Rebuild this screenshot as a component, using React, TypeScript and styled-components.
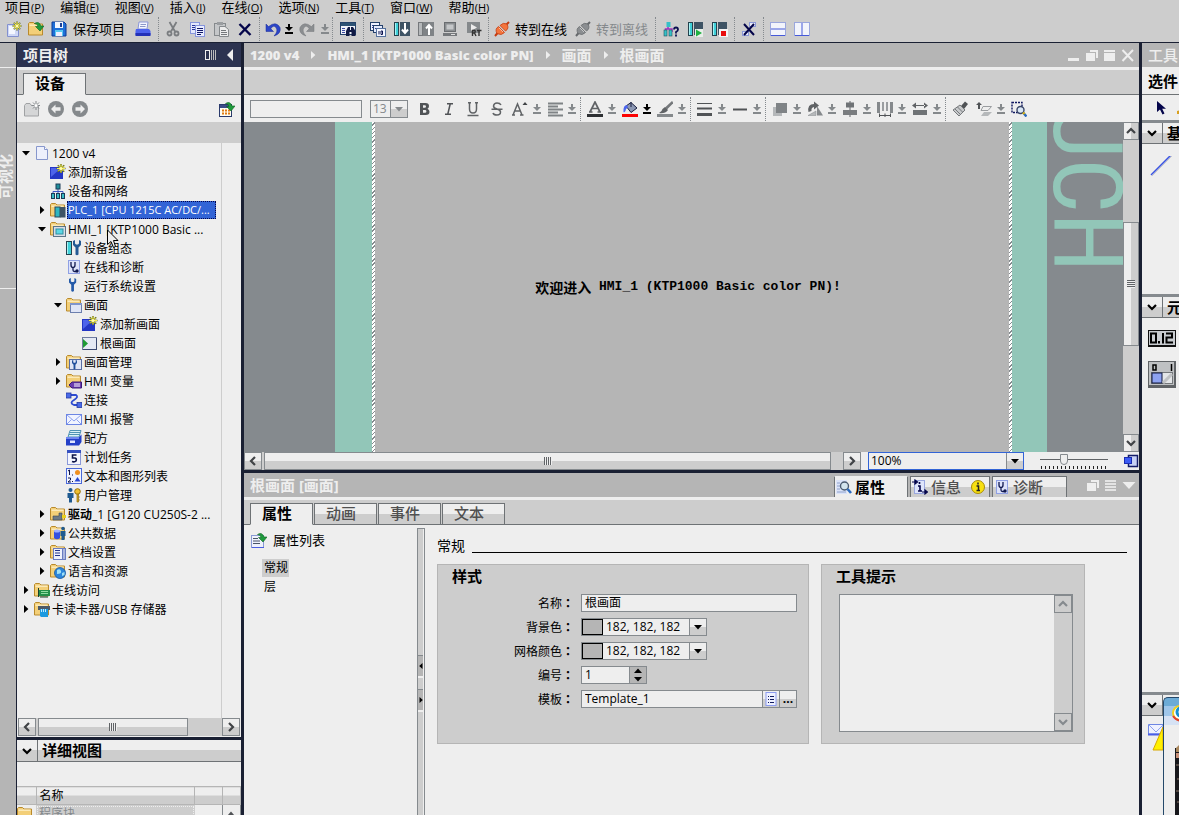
import React from 'react';
import styled, { createGlobalStyle, css } from 'styled-components';

const c = {
  panel: '#eeeeee',
  bar: '#cdcdcd',
  mid: '#b5b5b5',
  line: '#858a8e',
  edge: '#6e7275',
  dark: '#1a2033',
  title: '#2c3350',
  teal: '#92c6b8',
  slate: '#858a8e',
  select: '#3264d6',
  dim: '#85898c',
};
const split = 'linear-gradient(#eeeeee 50%, #cdcdcd 50%)';

const Global = createGlobalStyle`
  *, *::before, *::after { box-sizing: border-box; }
  html, body { margin: 0; padding: 0; }
  body {
    background: ${c.panel};
    color: #000;
    font: 12px/18px "Open Sans", "Noto Sans CJK SC", sans-serif;
    overflow: hidden;
  }
  button, input, select, textarea { font: inherit; color: inherit; margin: 0; padding: 0; border: 0; border-radius: 0; background: none; }
  ul { list-style: none; margin: 0; padding: 0; }
  h2, h3 { margin: 0; }
  svg { display: block; flex: none; }
`;

/* ---------- icon drawings ---------- */

const star = (x: number, y: number) => (
  <g transform={`translate(${x} ${y})`}>
    <path d="M0-4.500V4.500M-4.500 0H4.500M-3.200-3.200L3.200 3.200M3.200-3.200L-3.200 3.200" stroke="#5f6a20" strokeWidth="1.600" />
    <path d="M0-4V4M-4 0H4M-2.700-2.700L2.700 2.700M2.700-2.700L-2.700 2.700" stroke="#fff24a" strokeWidth="1" />
    <circle r="1.500" fill="#fffbb0" />
  </g>
);
const folder = (
  <>
    <path d="M.5 2.500L1.500 1.500H5.500L7 3H14.500V14H.5Z" fill="#f3cf78" stroke="#b98a2c" />
    <path d="M1.500 3.500H13.500V5H1.500Z" fill="#fbe9b8" />
  </>
);
const tealBar = (x: number, w = 5) => (
  <>
    <rect x={x} y="1" width={w} height="14" fill="#24424e" />
    <rect x={x + 1} y="2" width={w - 2} height="12" fill="#3fd0d8" />
    <rect x={x + 1} y="2" width="1" height="12" fill="#a8f2f4" />
  </>
);
const nodes = (
  <>
    <path d="M8 5V9M3 11V8.500H13V11M8 8V11" stroke="#3a55c0" fill="none" />
    <rect x="6" y="1" width="4" height="5" fill="#1f8f9a" stroke="#1c3c58" />
    <rect x="1.500" y="10.500" width="3" height="5" fill="#38bcc6" stroke="#1c3c58" />
    <rect x="6.500" y="10.500" width="3" height="5" fill="#38bcc6" stroke="#1c3c58" />
    <rect x="11.500" y="10.500" width="3" height="5" fill="#38bcc6" stroke="#1c3c58" />
  </>
);
const wrench = (x: number, fill: string, s = 1) => (
  <g transform={`translate(${x} 0) scale(${s})`}>
    <path d="M0 1V5L2.500 7.500V14.500Q4 16 5.500 14.500V7.500L8 5V1L6 0V3.500L5 4.500H3L2 3.500V0Z" fill={fill} />
  </g>
);
const stetho = (
  <>
    <rect x="2.500" y="1.500" width="11" height="13" fill="#dde3fa" stroke="#8fa0e4" />
    <path d="M5 3V6Q5 8.500 7 8.500T9 6V3M7 8.500V11Q7 12.500 8.500 12.500H10" stroke="#101850" fill="none" strokeWidth="1.300" />
    <circle cx="11" cy="12" r="1.700" fill="#101850" />
  </>
);
const greenArrow = (
  <path d="M6.500 2.500Q11-.5 13 5H16L12 10L7.500 5.500H10Q9.500 2.500 6.500 2.500Z" fill="#1f9a3c" stroke="#0d6420" strokeWidth=".6" />
);
const plug = (a: string, b: string) => (
  <>
    <path d="M1 15L4 11.500M12 4L15 1" stroke={b} strokeWidth="2" />
    <path d="M3 12.500Q.5 8 4.500 5.500L10.500 11.500Q7.500 15 3 12.500Z" fill={a} stroke={b} strokeWidth=".8" />
    <path d="M6 4.500Q9 1 13 3Q15.500 7.500 11.500 10Z" fill={a} stroke={b} strokeWidth=".8" />
    <path d="M5 7L9 11" stroke="#fff" strokeOpacity=".5" />
  </>
);

const icons: Record<string, React.ReactNode> = {
  newProject: (<><path d="M1.500 3.500H12.500V15.500H1.500Z" fill="#cfd8f6" stroke="#8391cf" /><path d="M3 5H9V13H3Z" fill="#f4f7ff" />{star(11, 5)}</>),
  open: (<>{folder}{greenArrow}</>),
  folder,
  save: (<><path d="M1 1H13L15 3V15H1Z" fill="#1f6fd8" stroke="#0f3b96" /><rect x="4" y="1" width="8" height="6" fill="#f2f6ff" /><rect x="9" y="2" width="2" height="4" fill="#1c3f94" /><rect x="4" y="9" width="8" height="6" fill="#58c8f0" /><rect x="5" y="11" width="6" height="4" fill="#eef" /></>),
  print: (<><path d="M4 1H13L12 8H3Z" fill="#f4f6ff" stroke="#8b96d6" /><path d="M5.500 3.500H11M5 5.500H10.500" stroke="#8d97c8" /><path d="M1 8H14L15.500 10V14H.5V10Z" fill="#4c62ee" /><path d="M.5 12H15.500V15H.5Z" fill="#2331b8" /></>),
  cut: (<g stroke="#7a7d80" fill="none" strokeWidth="1.800"><path d="M4.500 1L10 10.500M11.500 1L6 10.500" /><circle cx="4.500" cy="12.500" r="2" /><circle cx="11.500" cy="12.500" r="2" /></g>),
  copy: (<><rect x="1.500" y="1.500" width="9" height="11" fill="#e3e8fc" stroke="#8695dc" /><path d="M3 4.500H8M3 6.500H8M3 8.500H8" stroke="#26339a" /><rect x="6.500" y="4.500" width="9" height="11" fill="#e9edff" stroke="#8695dc" /><path d="M8 7.500H14M8 9.500H14M8 11.500H14M8 13.500H12" stroke="#121a6a" /></>),
  paste: (<><rect x="1.500" y="2.500" width="11" height="12" fill="#c5c7c9" stroke="#85898c" /><rect x="4" y="1" width="6" height="3" fill="#9a9da0" /><path d="M6.500 5.500H12L15.500 8.500V15.500H6.500Z" fill="#ececec" stroke="#85898c" /><path d="M8 9.500H13M8 11.500H14M8 13.500H14" stroke="#75787b" /></>),
  cross: (<path d="M2.500 3L13.500 14M13 3L2.500 14" stroke="#04054a" strokeWidth="2.400" />),
  undo: (<path d="M1 3V10.500H8.500L5.800 7.800Q8 3.500 11 6.500 13.500 10.500 9 15 16.500 12.500 15 6.500 11-.5 3.600 5.600Z" fill="#2b45c8" stroke="#1a2a94" strokeWidth=".5" />),
  redo: (<path d="M15 3V10.500H7.500L10.200 7.800Q8 3.500 5 6.500 2.500 10.500 7 15-.5 12.500 1 6.500 5-.5 12.400 5.600Z" fill="#8b8e91" stroke="#77797c" strokeWidth=".5" />),
  find: (<><rect x=".5" y="1.500" width="15" height="12" fill="#f0f2fa" stroke="#24426a" /><rect x="1" y="2" width="14" height="3" fill="#2c5274" /><path d="M2 7.500H5M2 9.500H5M2 11.500H5" stroke="#3a4aa0" /><path d="M6 15V10L8 6H10V9H11V6H13L15.500 10V15H11.500V11H9.500V15Z" fill="#101a44" /></>),
  compile: (<><rect x=".5" y="1.500" width="9" height="8" fill="#eef1ff" stroke="#24406a" /><path d="M2 4.500H8M2 6.500H8" stroke="#2a3a9a" /><rect x="3.500" y="4.500" width="9" height="7" fill="#e4e9fc" stroke="#24406a" /><path d="M5 7.500H9" stroke="#2a3a9a" /><rect x="6.500" y="7.500" width="9" height="8" fill="#f4f6ff" stroke="#55709c" /><path d="M9 10V13.500M11 10H12.500V13.500H11Z" stroke="#0c1450" fill="none" /></>),
  load: (<><rect x="6" y="1" width="10" height="14" fill="#3e5364" />{tealBar(0)}<path d="M11 2V11M8 8.500L11 12L14 8.500" stroke="#fff" strokeWidth="2" fill="none" /></>),
  upload: (<><rect x="5" y="1" width="11" height="14" fill="#7f8386" /><rect x=".5" y="1.500" width="4" height="13" fill="#b5b8ba" stroke="#75787b" /><path d="M11 14V5M8 7.500L11 4L14 7.500" stroke="#fff" strokeWidth="2" fill="none" /></>),
  simulate: (<><rect x="2.500" y="1.500" width="11" height="9" fill="#8b8e91" stroke="#6a6d70" /><rect x="4.500" y="3.500" width="7" height="5" fill="#c5c7c9" /><path d="M1 12H15V15H1Z" fill="#75787b" /><path d="M9 13.500H13" stroke="#ddd" /></>),
  runtime: (<><rect x="1" y="1" width="13" height="11" fill="#85898c" /><path d="M5 3V10L11 6.500Z" fill="#ececec" /><path d="M6.500 15V9.500H8.500Q10 10 8.500 12H7M8.500 12L10 15M11 9.500H15.500M13 9.500V15" stroke="#333" strokeWidth="1.400" fill="none" /></>),
  online: plug('#f4743c', '#c43c12'),
  offline: plug('#8b8e91', '#66696c'),
  diag: (<><path d="M5 5V8M2.500 11V8H9V11" stroke="#a030c0" fill="none" strokeWidth="1.500" /><rect x="3.500" y="1" width="4" height="5" fill="#35c0c8" /><rect x="1" y="9" width="3" height="6" fill="#35c0c8" stroke="#23505c" strokeWidth=".6" /><rect x="6" y="9" width="3" height="6" fill="#35c0c8" stroke="#23505c" strokeWidth=".6" /><path d="M11 8.500Q11 6.500 13 6.500T15 8.500Q15 10 13 11V12.500M13 13.500V15.500" stroke="#0a0f50" strokeWidth="1.800" fill="none" /></>),
  start: (<><rect x="6" y="1" width="9" height="13" fill="#3e5364" />{tealBar(0)}<rect x="7" y="8" width="8" height="8" fill="#e8efe9" /><path d="M8 8.500V15.500L14 12Z" fill="#1fb040" /></>),
  stop: (<><rect x="6" y="1" width="9" height="13" fill="#3e5364" />{tealBar(0)}<rect x="7" y="8" width="9" height="8" fill="#f4f4f4" /><rect x="9" y="10" width="5" height="5" fill="#e80c0c" /></>),
  crossRef: (<><rect x="8.500" y="1.500" width="6" height="4" fill="#e8ebfa" stroke="#8a98d8" /><rect x="1.500" y="10.500" width="6" height="4" fill="#e8ebfa" stroke="#8a98d8" /><path d="M3 3L13 14M13 3L3 14" stroke="#04054a" strokeWidth="2" /></>),
  splitH: (<><rect x=".5" y="1.500" width="15" height="13" fill="#f2f4fb" stroke="#9aa6dc" /><path d="M1 8H15M1 14.500H15" stroke="#4559d8" /></>),
  splitV: (<><rect x=".5" y="1.500" width="15" height="13" fill="#f2f4fb" stroke="#9aa6dc" /><path d="M8 2V14M1 14.500H15" stroke="#4559d8" /></>),

  folderNew: (<><path d="M.5 4.500L2 2.500H6L7.500 4.500H14.500V15H.5Z" fill="#d5d6d7" stroke="#a0a2a4" /><path d="M12 0V9M7.500 4.500H16M9 1.500L15 7.500M15 1.500L9 7.500" stroke="#85898c" /><circle cx="12" cy="4.500" r="1.500" fill="#fff" /></>),
  back: (<><circle cx="8" cy="8" r="8" fill="#85898c" /><path d="M7.500 3.500L3 8L7.500 12.500V9.700H12.500V6.300H7.500Z" fill="#eee" /></>),
  forward: (<><circle cx="8" cy="8" r="8" fill="#85898c" /><path d="M8.500 3.500L13 8L8.500 12.500V9.700H3.500V6.300H8.500Z" fill="#eee" /></>),
  overview: (<><rect x=".5" y="3.500" width="12" height="12" fill="#fffdf0" stroke="#2a3a6c" /><rect x="1" y="4" width="11" height="3" fill="#3c4c88" /><path d="M3 9.500H5M6 9.500H8M9 9.500H11M3 12.500H5M6 12.500H8M9 12.500H11" stroke="#e07a10" strokeWidth="2" />{greenArrow}</>),

  project: (<><path d="M2.500 1.500H10.500L13.500 4.500V14.500H2.500Z" fill="#edf0fc" stroke="#8797cc" /><path d="M10.500 1.500V4.500H13.500" fill="#fff" stroke="#8797cc" /></>),
  addBox: (<><rect x="0" y="3" width="13" height="12" fill="#2436c4" /><path d="M1 4H11L1 13Z" fill="#4d63ea" />{star(11, 4.500)}</>),
  network: nodes,
  plc: (<>{folder}<rect x="5" y="5" width="5" height="10" fill="#2fb6c0" stroke="#28485a" /><rect x="10" y="5" width="5.500" height="10.500" fill="#3e5364" /></>),
  hmi: (<>{folder}<rect x="3.500" y="5.500" width="12" height="10" fill="#d8dde6" stroke="#5b7488" /><rect x="6" y="8" width="7" height="5" fill="#5cd6e4" stroke="#2e8fa0" /></>),
  config: (<>{tealBar(0, 6)}<g transform="translate(7 0)">{wrench(0, '#245a94')}</g></>),
  stetho,
  runtimeSet: wrench(3, '#245aa8', 0.9),
  screens: (<>{folder}<rect x="4.500" y="6.500" width="11" height="9" fill="#dfe5f6" stroke="#6c7fae" /><path d="M4 6H16V8H4Z" fill="#7f95cc" /></>),
  rootScreen: (<><rect x=".5" y="2.500" width="14" height="12" fill="#e4e9f4" stroke="#6f7ba0" /><path d="M14.500 3V15M1 14.500H15" stroke="#3a4870" /><path d="M1 4V13L6 8.500Z" fill="#1c9a34" /></>),
  screenMgmt: (<>{folder}<rect x="3.500" y="5.500" width="12" height="10" fill="#dfe5f6" stroke="#5a6ea4" /><g transform="translate(6 6)">{wrench(0, '#1f4f9c', 0.62)}</g></>),
  tags: (<>{folder}<path d="M3 12L6 9H15.500V15H6Z" fill="#6a3cb0" stroke="#3c1a78" /><path d="M8 11H14M8 13H14" stroke="#fff" /></>),
  link: (<><path d="M4 3H10Q13 5 8 8T8 13H13" stroke="#2e4cd0" fill="none" strokeWidth="1.800" /><rect x="0" y="1" width="5" height="5" fill="#4a6ae6" stroke="#2438a0" strokeWidth=".8" /><rect x="11" y="10.500" width="5" height="5" fill="#4a6ae6" stroke="#2438a0" strokeWidth=".8" /></>),
  mail: (<><rect x=".5" y="3.500" width="15" height="10" fill="#f1f4ff" stroke="#6d86e4" /><path d="M1 4L8 10L15 4M1 13L5.500 8.500M15 13L10.500 8.500" stroke="#8ea2ee" fill="none" /></>),
  recipe: (<><path d="M4 .5H15L13 7H2Z" fill="#d9f1f7" stroke="#4f93b4" /><path d="M3.500 2.500H14.500M3 4.500H14" stroke="#4f93b4" /><path d="M0 7H13L15.500 4.500V12L13 15.500H0Z" fill="#2440c8" /><path d="M0 7H13V9H0Z" fill="#6f86f0" /><rect x="4" y="10.500" width="5" height="2.500" fill="#dfe6ff" /></>),
  schedule: (<><rect x="1.500" y="1.500" width="13" height="14" fill="#f4f6ff" stroke="#8a98d8" /><rect x="1" y="1" width="14" height="3" fill="#3450c0" /><path d="M10.500 6H6.500V9H9Q11 9.500 10 12 8.500 13.500 6 12.500" stroke="#0c1448" strokeWidth="1.600" fill="none" /></>),
  textList: (<><rect x=".5" y=".5" width="15" height="15" fill="#f1f4ff" stroke="#4a68d8" /><path d="M2 3L3.500 2V7M2 10H4.500V12L2 14H5M6.500 6.500V7.500M6.500 13V14" stroke="#0c1448" fill="none" /><circle cx="11.500" cy="4.500" r="2.500" fill="#f09020" /><path d="M8.500 13.500L11.500 9L14.500 13.500Z" fill="#2a48d0" /></>),
  users: (<><circle cx="4.500" cy="3" r="2" fill="#1f5a90" /><path d="M1.500 6H7.500V11H6V15.500H3V11H1.500Z" fill="#1f5a90" /><circle cx="11.500" cy="4.500" r="2.800" fill="#f0c030" stroke="#94700c" /><path d="M11 7H12.500V15H11ZM12.500 10H14M12.500 13H14" fill="#d8a820" stroke="#94700c" strokeWidth=".7" /></>),
  drive: (<>{folder}<path d="M3 10H9V7H12V14H3Z" fill="#6c7a86" stroke="#3c4650" strokeWidth=".6" /><rect x="12" y="9" width="4" height="3" fill="#e8d020" /></>),
  common: (<>{folder}<path d="M4 6Q7 4 10 6V13Q7 15.500 4 13Z" fill="#3350e0" /><ellipse cx="7" cy="6" rx="3" ry="1.500" fill="#9db0ff" /><circle cx="13" cy="3.500" r="1.800" fill="#1f5a90" /><path d="M10.500 6H15.500V11H14.500V15H11.500V11H10.500Z" fill="#1f5a90" /></>),
  docs: (<>{folder}<rect x="3.500" y="4.500" width="12" height="11" fill="#eef1fc" stroke="#6a7cc0" /><path d="M5 6.500H10M5 9H10M5 11.500H10" stroke="#24348c" /><path d="M12.500 5V15M14 5V15" stroke="#6a7cc0" /></>),
  globe: (<>{folder}<circle cx="10" cy="10" r="5.500" fill="#2c86dc" stroke="#1658a0" strokeWidth=".8" /><path d="M7 7Q10 5 11 8T7 11ZM12 10L14.500 9V12L12 13Z" fill="#9fe0f6" /></>),
  access: (<>{folder}<rect x="5" y="8" width="11" height="6" fill="#239048" /><path d="M4.500 6V15M7 14V16M9 14V16M11 14V16M13 14V16" stroke="#14402c" /><path d="M7 9.500H14M7 11.500H14" stroke="#8fdca0" /></>),
  card: (<>{folder}<rect x="4" y="5" width="12" height="4" fill="#4d5a68" /><path d="M6 8H14V16H7L6 15Z" fill="#1c9ae0" /><path d="M7.500 8V11M9.500 8V11M11.500 8V11" stroke="#bfe8ff" /></>),

  bold: (<path fillRule="evenodd" d="M3 2H8.500Q12 2 12 5 12 7 10.500 7.700 12.500 8.500 12.500 10.700 12.500 14 8.800 14H3ZM6 4.200V6.800H7.800Q9 6.800 9 5.500T7.800 4.200ZM6 9V11.800H8Q9.400 11.800 9.400 10.400T8 9Z" fill="#505356" />),
  italic: (<path d="M6 2.700H12M4 13.300H10M9.300 2.500L6.700 13.500" stroke="#505356" strokeWidth="1.500" />),
  underline: (<path d="M3 1.700H6M10 1.700H13M4.500 2V8Q4.500 12 8 12T11.500 8V2M2.500 14.500H13.500" stroke="#606366" strokeWidth="1.500" fill="none" />),
  strike: (<path d="M12 4Q11 2 8 2T4.500 5Q4.500 7 8 8T11.500 11Q11.500 14 8 14T4 12M2.500 8.300H13.500" stroke="#606366" strokeWidth="1.500" fill="none" />),
  fontSize: (<><path d="M1 14L5.500 3L10 14M2.500 10H8.500M0 14H3M8 14H11.500" stroke="#606366" strokeWidth="1.500" fill="none" /><path d="M10.500 4L13 1L15.500 4Z" fill="#404346" /></>),
  alignText: (<path d="M1 2.500H16M1 5.500H11M1 8.500H16M1 11.500H11M1 14.500H16" stroke="#7f8386" strokeWidth="2" />),
  fontColor: (<><path d="M3 11L8 1L13 11M5 7.500H11M2 11H5.500M10.500 11H14" stroke="#606366" strokeWidth="1.700" fill="none" /><rect x="0" y="13" width="16" height="3" fill="#2d3033" /></>),
  fill: (<><path d="M4 5L9 1.500L15 7L9 11.500Z" fill="#8c98b4" stroke="#1a2040" /><path d="M9 1V6" stroke="#1a2040" /><path d="M5 4Q1 4 1.500 11 3.500 12 4 8L6 6.500Z" fill="#4d66ee" /><rect x="0" y="13" width="16" height="3" fill="#fb0404" /></>),
  brush: (<><path d="M15 0L8 6.500L10 8.500L16.500 2Z" fill="#75787b" /><path d="M8 6L11 9Q8 13 2 12 5 10.500 5.500 8Z" fill="#606366" /><rect x="0" y="13" width="16" height="3" fill="#85898c" /></>),
  lines: (<><path d="M0 2.500H15" stroke="#505356" /><path d="M0 7.500H15" stroke="#505356" strokeWidth="2" /><path d="M0 13.500H15" stroke="#505356" strokeWidth="3" /></>),
  dash: (<path d="M1 8.500H15" stroke="#505356" strokeWidth="2" />),
  order: (<><rect x="1" y="6" width="9" height="9" fill="#b5b8ba" /><rect x="4" y="2" width="11" height="10" fill="#7f8386" /></>),
  rotate: (<><path d="M1.500 11Q0 3 7 3V.5L12 4.500L7 8.500V6Q4 6.500 4.500 10Z" fill="#606366" /><path d="M10 5V14.500H16Z" fill="#85898c" /><path d="M1 14.500L9 10V14.500Z" fill="#b5b8ba" stroke="#85898c" strokeWidth=".5" /></>),
  align: (<><path d="M8 0V16" stroke="#606366" /><rect x="4" y="1.500" width="8" height="5" fill="#6f7376" /><rect x="1" y="9" width="14" height="5" fill="#7a7d80" /></>),
  distribute: (<><rect x="0" y="1" width="3" height="11" fill="#85898c" /><rect x="5" y="1" width="2" height="9" fill="#9a9da0" /><rect x="9" y="1" width="2" height="9" fill="#9a9da0" /><rect x="13" y="1" width="3" height="11" fill="#85898c" /><path d="M2 14.500H14M2.500 12.500V16M8 12.500V16M13.500 12.500V16" stroke="#505356" /></>),
  sameSize: (<><path d="M0 4.500L4 1.500V7.500ZM16 4.500L12 1.500V7.500ZM3 4H13V5H3Z" fill="#606366" /><rect x="1" y="9" width="14" height="5" fill="#6f7376" /></>),
  format: (<><path d="M16 3L13 .5L9 5L12 8Z" fill="#505356" /><path d="M8 4L13 9L7 15L1 9Z" fill="#c8cacc" stroke="#75787b" /><path d="M3 8L8 13M5.500 6L10.500 11" stroke="#75787b" /></>),
  layer: (<><path d="M3 1L6 4H4V8H2V4H0Z" fill="#505356" /><path d="M7 5.500H15.500L12 9.500H5Z" fill="#eee" stroke="#9a9da0" /><path d="M8 11H16L12 15H5Z" fill="#b5b8ba" /></>),
  zoomSel: (<><rect x="1" y="1.500" width="10" height="10" fill="none" stroke="#101860" strokeDasharray="2 1" strokeWidth="1.400" /><circle cx="9.500" cy="9" r="3.500" fill="#dbe8f6" stroke="#3a4668" strokeWidth="1.400" /><path d="M12 11.500L15.500 15.500" stroke="#2a6ac0" strokeWidth="2.400" /><path d="M12 11.500L13.500 13" stroke="#d8b010" strokeWidth="2.400" /></>),
  pointer: (<path d="M2 1V12L5 9.500L7.500 14.500L9.500 13.500L7.200 8.800H11Z" fill="#04054a" />),

  propList: (<><rect x=".5" y="3.500" width="12" height="12" fill="#eef1fc" stroke="#8a9ad4" /><path d="M2 6.500H7M2 9H9M2 11.500H9" stroke="#4a5568" /><path d="M1 15.500H13" stroke="#4a5ee0" />{greenArrow}</>),
  inspect: (<><rect x="0" y="1" width="11" height="14" fill="#dbe3f8" /><path d="M1 4H4M1 7H4M1 10H4M1 13H10" stroke="#8ea2cc" /><circle cx="8.500" cy="7" r="4" fill="#d3e4ee" stroke="#4a5a70" strokeWidth="1.400" /><path d="M11.500 10L15 14" stroke="#2a6ac0" strokeWidth="2.600" /></>),
  info: (<><rect x="2.500" y="1.500" width="10" height="13" fill="#dfe5fb" stroke="#9aa8e0" /><path d="M0 3H4M3 1L5.500 3L3 5ZM10 13H14M13 11L15.500 13L13 15Z" stroke="#04054a" fill="#04054a" strokeWidth="1.200" /><path d="M7.500 3V5M6 7H8V12M6 12H10" stroke="#04054a" strokeWidth="1.600" fill="none" /></>),
  infoBadge: (<><circle cx="8" cy="8" r="6.500" fill="#f8e010" stroke="#a88c08" /><path d="M8 3.500V5.500M6.500 7H8.500V11.500M6.500 11.500H10" stroke="#222" strokeWidth="1.500" fill="none" /></>),
  winMin: (<rect x="2" y="11" width="11" height="3" fill="#eee" />),
  winRestore: (<><path d="M6 3H14V11H12V5H6Z" fill="#eee" /><rect x="2" y="6" width="9" height="8" fill="#eee" /></>),
  winMax: (<path d="M2 3H13V5H2ZM2 6H13V14H2Z" fill="#eee" />),
  winClose: (<path d="M2.500 3L13 14M13 3L2.500 14" stroke="#eee" strokeWidth="2" />),
  winList: (<path d="M2 3H13V5H2ZM2 6H13V8H2ZM2 9H13V11H2ZM2 12H13V14H2Z" fill="#e4e4e4" />),
  winDown: (<path d="M1.500 5H14.500L8 12Z" fill="#eee" />),
  columns: (<><rect x="2.500" y="3.500" width="4" height="9" fill="none" stroke="#eee" /><path d="M8.500 3V13M10.500 3V13M12.500 3V13" stroke="#bbb" /></>),
  collapse: (<path d="M11 2V14L5 8Z" fill="#eee" />),
  listBtn: (<><rect x="3" y="1.500" width="10" height="13" fill="#eef1ff" stroke="#8c9cf0" /><path d="M5 5.500H6M7 5.500H11M5 8.500H6M7 8.500H11M5 11.500H6M7 11.500H11" stroke="#101a60" /></>),
  fit: (<><rect x="5.500" y="2.500" width="9" height="11" fill="#c8d2f6" stroke="#141c68" strokeWidth="1.500" /><rect x="1.500" y="4.500" width="7" height="6" fill="#3c5cf4" stroke="#1a2cb0" /></>),
};

function Icon({ name, size = 16 }: { name: string; size?: number }) {
  return (
    <svg width={size} height={size} viewBox="0 0 16 16" fill="none" aria-hidden="true">
      {icons[name]}
    </svg>
  );
}
function Drop({ active }: { active?: boolean }) {
  return (
    <svg width="8" height="10" viewBox="0 0 8 10" fill={active ? '#000' : c.dim} aria-hidden="true">
      <path d="M3 0H5V3H8L4 7L0 3H3ZM0 8H8V10H0Z" />
    </svg>
  );
}
type Dir = 'up' | 'down' | 'left' | 'right';
const turn: Record<Dir, number> = { down: 0, left: 90, up: 180, right: 270 };
function Chevron({ dir, color = '#404346' }: { dir: Dir; color?: string }) {
  return (
    <svg width="10" height="10" viewBox="0 0 10 10" fill="none" aria-hidden="true">
      <path d="M1 3L5 7L9 3" stroke={color} strokeWidth="2.200" transform={`rotate(${turn[dir]} 5 5)`} />
    </svg>
  );
}
function Tri({ dir, color = '#000', size = 10 }: { dir: Dir; color?: string; size?: number }) {
  return (
    <svg width={size} height={size} viewBox="0 0 10 10" aria-hidden="true">
      <path d="M0 2.500H10L5 8Z" fill={color} transform={`rotate(${turn[dir]} 5 5)`} />
    </svg>
  );
}

/* ---------- frame ---------- */

const Shell = styled.div`
  display: flex;
  flex-direction: column;
  height: 100vh;
  min-height: 480px;
  overflow: hidden;
  background: ${c.bar};
`;
const MenuBar = styled.nav`
  display: flex;
  gap: 16px;
  height: 16px;
  flex: none;
  padding-left: 5px;
`;
const MenuItem = styled.button`
  height: 14px;
  font-size: 13px;
  line-height: 14px;
  white-space: nowrap;
  small { font-size: 11px; }
`;
const ToolBar = styled.div`
  display: flex;
  align-items: center;
  height: 27px;
  flex: none;
  padding-left: 3px;
  border-bottom: 1px solid ${c.dark};
`;
const Tool = styled.button<{ $w?: number }>`
  display: flex;
  flex: none;
  align-items: center;
  justify-content: center;
  width: ${(p) => p.$w ?? 24}px;
  height: 20px;
`;
const ToolText = styled.button<{ $dim?: boolean }>`
  flex: none;
  width: 59px;
  height: 20px;
  padding-left: 2px;
  font-size: 13px;
  line-height: 18px;
  text-align: left;
  white-space: nowrap;
  color: ${(p) => (p.$dim ? c.dim : '#000')};
`;
const Sep = styled.span`
  flex: none;
  width: 1px;
  height: 24px;
  margin: 0 2px;
  border-left: 1px dotted ${c.line};
`;
const Body = styled.div`
  display: grid;
  grid-template-columns: 17px 227px minmax(0, 1fr) 37px;
  flex: 1;
  min-height: 0;
`;
const Strip = styled.div`
  display: flex;
  flex-direction: column;
  background: ${c.mid};
  border-right: 1px solid ${c.dark};
  overflow: hidden;
`;
const StripTop = styled.div`
  height: 25px;
  flex: none;
  border-bottom: 1px solid ${c.panel};
`;
const StripTab = styled.button`
  display: flex;
  align-items: flex-start;
  height: 221px;
  flex: none;
  padding-top: 86px;
  border-bottom: 1px solid ${c.panel};
  color: ${c.panel};
  font-size: 15px;
  font-weight: 700;
  line-height: 16px;
  span { writing-mode: vertical-rl; transform: rotate(180deg); text-orientation: sideways; margin-left: -3px; }
`;
const Side = styled.aside`
  display: flex;
  flex-direction: column;
  min-height: 0;
  background: ${c.panel};
  border-right: 3px solid ${c.dark};
`;
const Title = styled.header<{ $active?: boolean }>`
  display: flex;
  align-items: center;
  flex: none;
  height: 27px;
  padding: 0 2px 0 6px;
  border-bottom: 3px solid ${c.panel};
  background: ${(p) => (p.$active ? c.title : c.mid)};
  color: ${c.panel};
  font-size: 15px;
  font-weight: 700;
  line-height: 22px;
  white-space: nowrap;
  h2 { flex: 1; font: inherit; }
`;
const TabStrip = styled.div`
  display: flex;
  align-items: flex-end;
  gap: 1px;
  flex: none;
  height: 25px;
  padding-left: 6px;
  background: linear-gradient(${c.bar} 24px, ${c.edge} 24px);
`;
const Tab = styled.button<{ $on?: boolean }>`
  width: 63px;
  height: 22px;
  padding: 0 0 1px 11px;
  border: 1px solid ${c.edge};
  border-bottom-color: ${(p) => (p.$on ? c.panel : c.edge)};
  background: ${(p) => (p.$on ? c.panel : split)};
  color: ${(p) => (p.$on ? '#000' : '#505050')};
  font-size: 15px;
  font-weight: ${(p) => (p.$on ? 700 : 500)};
  line-height: 17px;
  text-align: left;
  white-space: nowrap;
`;
const SideTools = styled.div`
  display: flex;
  align-items: center;
  flex: none;
  height: 27px;
  padding: 0 4px 0 3px;
`;
const Grow = styled.span`
  flex: 1;
`;
const HeadBand = styled.div`
  height: 21px;
  flex: none;
  background: ${c.bar};
`;

/* ---------- tree ---------- */

const TreeBox = styled.div`
  position: relative;
  flex: 1;
  min-height: 0;
  overflow: hidden;
  margin-right: 19px;
  border-right: 1px solid ${c.bar};
`;
const TreeRow = styled.li<{ $level: number }>`
  display: flex;
  align-items: center;
  height: 19px;
  padding-left: ${(p) => 3 + p.$level * 16}px;
  white-space: nowrap;
`;
const Twist = styled.span`
  width: 14px;
  flex: none;
  padding-left: 2px;
`;
const NodeText = styled.span<{ $sel?: boolean }>`
  height: 18px;
  margin-left: 1px;
  padding: 0 1px;
  line-height: 20px;
  ${(p) => p.$sel && css`
    width: 149px;
    background: ${c.select};
    color: #fff;
    font-size: 11px;
    line-height: 18px;
    outline: 1px dotted #04054a;
    outline-offset: -1px;
  `}
`;
const Cursor = styled.svg`
  position: absolute;
  left: 90px;
  top: 86px;
`;

type Row = { level: number; icon: string; text: React.ReactNode; open?: boolean; sel?: boolean };
const rows: Row[] = [
  { level: 0, icon: 'project', text: '1200 v4', open: true },
  { level: 1, icon: 'addBox', text: '添加新设备' },
  { level: 1, icon: 'network', text: '设备和网络' },
  { level: 1, icon: 'plc', text: 'PLC_1 [CPU 1215C AC/DC/...', open: false, sel: true },
  { level: 1, icon: 'hmi', text: 'HMI_1 [KTP1000 Basic ...', open: true },
  { level: 2, icon: 'config', text: '设备组态' },
  { level: 2, icon: 'stetho', text: '在线和诊断' },
  { level: 2, icon: 'runtimeSet', text: '运行系统设置' },
  { level: 2, icon: 'screens', text: '画面', open: true },
  { level: 3, icon: 'addBox', text: '添加新画面' },
  { level: 3, icon: 'rootScreen', text: '根画面' },
  { level: 2, icon: 'screenMgmt', text: '画面管理', open: false },
  { level: 2, icon: 'tags', text: 'HMI 变量', open: false },
  { level: 2, icon: 'link', text: '连接' },
  { level: 2, icon: 'mail', text: 'HMI 报警' },
  { level: 2, icon: 'recipe', text: '配方' },
  { level: 2, icon: 'schedule', text: '计划任务' },
  { level: 2, icon: 'textList', text: '文本和图形列表' },
  { level: 2, icon: 'users', text: '用户管理' },
  { level: 1, icon: 'drive', text: <><b>驱动</b>_1 [G120 CU250S-2 ...</>, open: false },
  { level: 1, icon: 'common', text: '公共数据', open: false },
  { level: 1, icon: 'docs', text: '文档设置', open: false },
  { level: 1, icon: 'globe', text: '语言和资源', open: false },
  { level: 0, icon: 'access', text: '在线访问', open: false },
  { level: 0, icon: 'card', text: '卡读卡器/USB 存储器', open: false },
];

/* ---------- scroll bars ---------- */

const HScroll = styled.div`
  display: flex;
  flex: 1;
  gap: 2px;
  height: 18px;
  background: ${c.bar};
`;
const SideScroll = styled.div`
  display: flex;
  flex: none;
  padding: 0 1px 1px;
  border-bottom: 3px solid ${c.dark};
`;
const ScrollBtn = styled.button<{ $v?: boolean }>`
  display: flex;
  align-items: center;
  justify-content: center;
  flex: none;
  width: ${(p) => (p.$v ? 'auto' : '18px')};
  height: 18px;
  border: 1px solid ${c.line};
  background: ${(p) => (p.$v ? `linear-gradient(90deg, ${c.panel} 50%, ${c.bar} 50%)` : split)};
`;
const HThumb = styled.div<{ $end: number }>`
  display: flex;
  align-items: center;
  justify-content: center;
  flex: 1;
  margin-right: ${(p) => p.$end}px;
  border: 1px solid ${c.line};
  background: ${split};
`;
const VScroll = styled.div`
  display: flex;
  flex-direction: column;
  flex: none;
  width: 16px;
  background: ${c.bar};
`;
const VThumb = styled.div`
  display: flex;
  align-items: center;
  justify-content: center;
  margin: 82px 0 88px;
  flex: 1;
  border: 1px solid ${c.line};
  background: linear-gradient(90deg, ${c.panel} 50%, ${c.bar} 50%);
`;
const Grip = styled.span<{ $v?: boolean }>`
  width: 8px;
  height: 8px;
  background: repeating-linear-gradient(${(p) => (p.$v ? '180deg' : '90deg')}, #606366 0 1px, ${c.panel} 1px 2px);
`;

/* ---------- details view ---------- */

const Section = styled.div`
  display: flex;
  align-items: stretch;
  flex: none;
  height: 22px;
  border-bottom: 1px solid ${c.edge};
  background: ${split};
  h3 { padding-left: 4px; font-size: 15px; line-height: 20px; white-space: nowrap; }
`;
const Fold = styled.button`
  display: flex;
  align-items: center;
  justify-content: center;
  flex: none;
  width: 21px;
  border-right: 1px solid ${c.edge};
`;
const Detail = styled.div`
  flex: none;
  height: 53px;
  padding-top: 24px;
  overflow: hidden;
`;
const DetailTable = styled.table`
  width: 100%;
  border-collapse: collapse;
  table-layout: fixed;
  th, td { height: 18px; padding: 0 0 0 3px; text-align: left; font-weight: 400; line-height: 16px; }
  th { border: 1px solid ${c.mid}; border-width: 1px 1px 1px 0; background: ${split}; }
  td { color: ${c.dim}; padding-left: 3px; }
  td:first-child { padding: 0; }
  td:nth-child(2) { background: ${c.bar}; outline: 1px dotted ${c.panel}; outline-offset: -2px; }
  td:last-child { padding: 0 0 0 4px; border: 1px solid ${c.line}; }
`;

/* ---------- editor ---------- */

const Main = styled.main`
  display: flex;
  flex-direction: column;
  min-width: 0;
  min-height: 0;
  border-right: 3px solid ${c.dark};
  background: ${c.panel};
`;
const Crumbs = styled.h2`
  display: flex;
  align-items: center;
  gap: 10px;
  b { font-size: 13px; }
`;
const FormatHead = styled.div`
  flex: none;
  height: 25px;
  background: ${c.bar};
  border-bottom: 1px solid ${c.edge};
`;
const FormatBar = styled.div`
  display: flex;
  align-items: center;
  flex: none;
  height: 27px;
  padding-left: 6px;
`;
const FontBox = styled.input`
  width: 112px;
  height: 18px;
  margin-right: 8px;
  border: 1px solid ${c.line};
`;
const Pick = styled.span<{ $w: number; $blue?: boolean; $off?: boolean }>`
  display: grid;
  grid-template-columns: minmax(0, 1fr) 17px;
  flex: none;
  width: ${(p) => p.$w}px;
  height: 18px;
  border: 1px solid ${(p) => (p.$blue ? c.select : c.line)};
  color: ${(p) => (p.$off ? c.dim : '#000')};
  select {
    grid-area: 1 / 1 / 2 / 3;
    appearance: none;
    padding: 0 2px;
    background: ${c.panel};
    line-height: 16px;
  }
`;
const PickArrow = styled.span`
  display: flex;
  align-items: center;
  justify-content: center;
  grid-area: 1 / 2;
  border-left: 1px solid ${c.line};
  background: ${split};
  pointer-events: none;
`;
const FormatGap = styled.span`
  width: 5px;
  flex: none;
`;
const Stage = styled.div`
  display: flex;
  flex: none;
  height: 330px;
`;
const Canvas = styled.div`
  display: flex;
  flex: 1;
  min-width: 0;
  background: ${c.slate};
`;
const Margin = styled.div<{ $w: number; $teal?: boolean }>`
  position: relative;
  flex: none;
  width: ${(p) => p.$w}px;
  overflow: hidden;
  background: ${(p) => (p.$teal ? c.teal : c.slate)};
`;
const Hatch = styled.div`
  flex: none;
  width: 3px;
  background: repeating-linear-gradient(135deg, #fff 0 2px, ${c.line} 2px 3px);
`;
const Screen = styled.div`
  display: flex;
  align-items: center;
  justify-content: center;
  flex: 1;
  min-width: 0;
  padding-right: 8px;
  background: ${c.mid};
  font: 700 13px/20px "Liberation Mono", monospace;
  white-space: pre;
  span { font-family: "Noto Sans CJK SC", sans-serif; font-size: 14px; line-height: 16px; }
`;
const Brand = styled.div`
  position: absolute;
  left: -10px;
  bottom: 180px;
  color: ${c.teal};
  font: 400 96px/100px "Roboto Condensed", "Open Sans Condensed", "DejaVu Sans Condensed", sans-serif;
  writing-mode: vertical-rl;
`;
const StageFoot = styled.div`
  display: flex;
  align-items: center;
  flex: none;
  height: 21px;
  padding-right: 1px;
  border-bottom: 3px solid ${c.dark};
`;
const ZoomArea = styled.div`
  display: flex;
  align-items: center;
  gap: 16px;
  padding-left: 7px;
`;
const SlideBox = styled.div`
  width: 68px;
  height: 16px;
  background: repeating-linear-gradient(90deg, #222 0 1px, transparent 1px 4px) 1px 13px / 66px 3px no-repeat;
`;
const Slide = styled.input`
  appearance: none;
  display: block;
  width: 68px;
  height: 13px;
  background: linear-gradient(#606366, #606366) 0 6px / 100% 1px no-repeat;
  &::-webkit-slider-thumb {
    appearance: none;
    width: 8px;
    height: 11px;
    background: ${c.panel};
    border: 1px solid ${c.line};
    border-radius: 0 0 4px 4px;
  }
`;

/* ---------- inspector ---------- */

const Inspector = styled.section`
  display: flex;
  flex-direction: column;
  flex: 1;
  min-height: 0;
`;
const InfoTabs = styled.div`
  display: flex;
  align-self: flex-end;
  gap: 2px;
  height: 21px;
  margin-right: 18px;
`;
const InfoTab = styled.button<{ $w: number; $on?: boolean }>`
  display: flex;
  align-items: center;
  gap: 3px;
  width: ${(p) => p.$w}px;
  padding: 0 3px 0 1px;
  border: 1px solid ${(p) => (p.$on ? c.panel : c.edge)};
  border-left-color: ${c.edge};
  border-right-color: ${c.edge};
  border-bottom: 0;
  background: ${(p) => (p.$on ? c.panel : split)};
  color: ${(p) => (p.$on ? '#000' : '#505050')};
  font-size: 15px;
  font-weight: ${(p) => (p.$on ? 700 : 500)};
  line-height: 18px;
  white-space: nowrap;
`;
const WinBtns = styled.div`
  display: flex;
  gap: 2px;
`;
const InspBody = styled.div`
  display: grid;
  grid-template-columns: 173px 8px minmax(0, 1fr);
  flex: 1;
  min-height: 0;
  overflow: hidden;
`;
const PropNav = styled.nav`
  padding: 6px 0 0 7px;
`;
const PropHead = styled.div`
  display: flex;
  align-items: center;
  gap: 6px;
  height: 18px;
  margin-bottom: 10px;
  font-size: 13px;
`;
const PropItem = styled.a<{ $on?: boolean }>`
  display: block;
  width: 27px;
  height: 18px;
  margin: 0 0 1px 11px;
  padding-left: 2px;
  line-height: 18px;
  color: #000;
  text-decoration: none;
  background: ${(p) => (p.$on ? c.bar : 'none')};
`;
const Splitter = styled.div`
  display: flex;
  flex-direction: column;
  gap: 11px;
  margin-top: 3px;
  padding-top: 126px;
  border: 1px solid ${c.line};
  border-bottom: 0;
  background: linear-gradient(90deg, ${c.bar} 5px, ${c.panel} 5px);
`;
const SplitBtn = styled.button`
  display: flex;
  align-items: center;
  justify-content: center;
  width: 5px;
  height: 23px;
  border-top: 1px solid ${c.line};
  border-bottom: 2px solid ${c.panel};
  background: ${c.mid};
`;
const Props = styled.div`
  padding: 12px 12px 0;
  min-width: 0;
`;
const PropTitle = styled.div`
  display: flex;
  align-items: center;
  gap: 7px;
  height: 18px;
  margin-bottom: 9px;
  h3 { font-size: 14px; font-weight: 400; line-height: 18px; }
  &::after { content: ''; flex: 1; margin-top: 12px; border-top: 1px solid #000; }
`;
const Groups = styled.div`
  display: flex;
  gap: 12px;
`;
const Group = styled.fieldset<{ $w: number }>`
  display: flex;
  flex-direction: column;
  gap: 6px;
  width: ${(p) => p.$w}px;
  height: 180px;
  min-width: 0;
  margin: 0;
  padding: 2px 11px 11px 14px;
  border: 1px solid ${c.mid};
  background: ${c.bar};
  h3 { height: 21px; font-size: 15px; line-height: 19px; }
`;
const Field = styled.div`
  display: grid;
  grid-template-columns: 122px minmax(0, 1fr);
  gap: 7px;
  height: 18px;
  label { text-align: right; line-height: 18px; white-space: nowrap; }
`;
const Colon = styled.span`
  font-family: "Noto Sans CJK TC", sans-serif;
  font-weight: 700;
`;
const FieldBox = styled.div<{ $w?: number }>`
  display: flex;
  width: ${(p) => (p.$w ? `${p.$w}px` : 'auto')};
  height: 18px;
  border: 1px solid ${c.line};
  background: ${c.panel};
  input { flex: 1; min-width: 0; padding: 0 3px; line-height: 16px; appearance: textfield; }
  input::-webkit-inner-spin-button { appearance: none; margin: 0; }
`;
const ColorPick = styled(Pick)`
  grid-template-columns: 21px minmax(0, 1fr) 17px;
  select { grid-area: 1 / 2 / 2 / 4; padding: 0 3px; }
  ${PickArrow} { grid-area: 1 / 3; }
`;
const Swatch = styled.span`
  grid-area: 1 / 1;
  border: 1px solid #000;
  background: ${c.mid};
`;
const Spin = styled.div`
  display: flex;
  flex-direction: column;
  width: 17px;
  border-left: 1px solid ${c.line};
  background: ${c.mid};
  button { display: flex; align-items: center; justify-content: center; height: 8px; }
`;
const MiniBtn = styled.button`
  display: flex;
  align-items: center;
  justify-content: center;
  width: 17px;
  border-left: 1px solid ${c.line};
  background: ${split};
  font-weight: 700;
  line-height: 12px;
`;
const TipBox = styled.div`
  display: flex;
  flex: 1;
  margin-left: 3px;
  border: 1px solid ${c.line};
  textarea { flex: 1; min-width: 0; resize: none; background: ${c.panel}; outline: 0; }
`;
const TipScroll = styled.div`
  display: flex;
  flex-direction: column;
  justify-content: space-between;
  width: 18px;
  button { display: flex; align-items: center; justify-content: center; height: 18px; border: 1px solid ${c.line}; }
`;

/* ---------- toolbox ---------- */

const Toolbox = styled.aside`
  display: flex;
  flex-direction: column;
  min-width: 0;
  min-height: 0;
  overflow: hidden;
  background: ${c.panel};
`;
const BoxTitle = styled(Title)`
  font-weight: 500;
`;
const BoxHead = styled.div`
  flex: none;
  height: 25px;
  padding-left: 6px;
  border-bottom: 1px solid ${c.edge};
  font-size: 15px;
  font-weight: 700;
  line-height: 23px;
  white-space: nowrap;
`;
const BoxTools = styled.div`
  display: flex;
  align-items: center;
  flex: none;
  gap: 4px;
  height: 25px;
  padding-left: 13px;
`;
const Palette = styled.div<{ $h?: number }>`
  display: flex;
  flex-direction: column;
  gap: 14px;
  flex: ${(p) => (p.$h ? 'none' : 1)};
  height: ${(p) => (p.$h ? `${p.$h}px` : 'auto')};
  min-height: 0;
  padding: 12px 6px 0;
  overflow: hidden;
`;
const Ruled = styled(Section)`
  height: 24px;
  border-top: 3px solid ${c.line};
  background-origin: padding-box;
  background-clip: padding-box;
`;
const LastArea = styled.div`
  position: relative;
  flex: none;
  height: 123px;
`;
const Popup = styled.div`
  position: absolute;
  left: 21px;
  top: 5px;
  right: 0;
  bottom: 0;
  overflow: hidden;
  border: 1px solid #24486a;
  border-right: 0;
  border-bottom: 0;
  border-top-left-radius: 5px;
  background: linear-gradient(#6cabd6 0 8px, #9fc6ea 8px 18px, #d6e2f4 18px 27px, #eeeeee 27px);
`;

const menus: [string, string][] = [
  ['项目', 'P'], ['编辑', 'E'], ['视图', 'V'], ['插入', 'I'], ['在线', 'O'],
  ['选项', 'N'], ['工具', 'T'], ['窗口', 'W'], ['帮助', 'H'],
];

function T({ i, w, label }: { i: string; w?: number; label: string }) {
  return <Tool $w={w} aria-label={label} title={label}><Icon name={i} /></Tool>;
}
function D({ w = 10, active }: { w?: number; active?: boolean }) {
  return <Tool $w={w} aria-label="更多"><Drop active={active} /></Tool>;
}
function Pair({ i, label, active }: { i: string; label: string; active?: boolean }) {
  return <><T i={i} w={23} label={label} /><D w={12} active={active} /></>;
}

function ProjectTree() {
  return (
    <Side>
      <Title $active>
        <h2>项目树</h2>
        <Tool $w={20} aria-label="列"><Icon name="columns" /></Tool>
        <Tool $w={18} aria-label="折叠"><Icon name="collapse" /></Tool>
      </Title>
      <TabStrip><Tab $on>设备</Tab></TabStrip>
      <SideTools>
        <T i="folderNew" label="新建组" /><T i="back" label="后退" /><T i="forward" label="前进" />
        <Grow /><T i="overview" w={20} label="总览" />
      </SideTools>
      <HeadBand />
      <TreeBox>
        <ul role="tree" aria-label="项目树">
          {rows.map((r, n) => (
            <TreeRow key={n} $level={r.level} role="treeitem" aria-expanded={r.open} aria-selected={!!r.sel}>
              <Twist>{r.open !== undefined && <Tri dir={r.open ? 'down' : 'right'} size={8} />}</Twist>
              <Icon name={r.icon} />
              <NodeText $sel={r.sel}>{r.text}</NodeText>
            </TreeRow>
          ))}
        </ul>
        <Cursor width="12" height="20" viewBox="0 0 12 20" aria-hidden="true">
          <path d="M.5 1V15.500L4 12.500L6.500 18.500L8.500 17.500L6.500 11.500H11Z" fill="#eee" stroke="#000" />
        </Cursor>
      </TreeBox>
      <SideScroll>
        <HScroll>
          <ScrollBtn aria-label="向左"><Chevron dir="left" /></ScrollBtn>
          <HThumb $end={32}><Grip /></HThumb>
          <ScrollBtn aria-label="向右"><Chevron dir="right" /></ScrollBtn>
        </HScroll>
      </SideScroll>
      <Section>
        <Fold aria-label="折叠详细视图"><Chevron dir="down" color="#000" /></Fold>
        <h3>详细视图</h3>
      </Section>
      <Detail>
        <DetailTable>
          <colgroup><col style={{ width: 19 }} /><col /><col style={{ width: 28 }} /><col style={{ width: 18 }} /></colgroup>
          <thead><tr><th /><th>名称</th><th /><th /></tr></thead>
          <tbody><tr>
            <td><Icon name="folder" /></td><td>程序块</td><td />
            <td><Tri dir="up" color="#505356" size={8} /></td>
          </tr></tbody>
        </DetailTable>
      </Detail>
    </Side>
  );
}

function Editor() {
  return (
    <>
      <Title>
        <Crumbs>
          <b>1200 v4</b><Tri dir="right" color={c.panel} size={8} />
          <b>HMI_1 [KTP1000 Basic color PN]</b><Tri dir="right" color={c.panel} size={8} />
          画面<Tri dir="right" color={c.panel} size={8} />根画面
        </Crumbs>
        <Tool $w={18} aria-label="最小化"><Icon name="winMin" /></Tool>
        <Tool $w={18} aria-label="还原"><Icon name="winRestore" /></Tool>
        <Tool $w={18} aria-label="最大化"><Icon name="winMax" /></Tool>
        <Tool $w={18} aria-label="关闭"><Icon name="winClose" /></Tool>
      </Title>
      <FormatHead />
      <FormatBar>
        <FontBox aria-label="字体" />
        <Pick $w={38} $off>
          <select aria-label="字号"><option>13</option></select>
          <PickArrow><Tri dir="down" color={c.dim} size={8} /></PickArrow>
        </Pick>
        <FormatGap />
        <T i="bold" label="粗体" /><T i="italic" label="斜体" /><T i="underline" label="下划线" /><T i="strike" w={23} label="删除线" />
        <Pair i="fontSize" label="字号" /><Pair i="alignText" label="对齐" />
        <Sep />
        <Pair i="fontColor" label="文本颜色" /><Pair i="fill" label="背景色" active /><Pair i="brush" label="边框颜色" />
        <Sep />
        <Pair i="lines" label="线宽" /><Pair i="dash" label="线型" />
        <Sep />
        <Pair i="order" label="层次" /><Pair i="rotate" label="旋转" /><Pair i="align" label="对齐对象" />
        <Pair i="distribute" label="分布" /><Pair i="sameSize" label="等宽" />
        <Sep />
        <T i="format" label="格式刷" /><Pair i="layer" label="层" /><T i="zoomSel" label="缩放" />
      </FormatBar>
      <Stage>
        <Canvas>
          <Margin $w={91} />
          <Margin $w={37} $teal />
          <Hatch />
          <Screen><span>欢迎进入</span>{' HMI_1 (KTP1000 Basic color PN)!'}</Screen>
          <Hatch />
          <Margin $w={35} $teal />
          <Margin $w={76}><Brand>TOUCH</Brand></Margin>
        </Canvas>
        <VScroll>
          <ScrollBtn $v aria-label="向上"><Chevron dir="up" /></ScrollBtn>
          <VThumb><Grip $v /></VThumb>
          <ScrollBtn $v aria-label="向下"><Chevron dir="down" /></ScrollBtn>
        </VScroll>
      </Stage>
      <StageFoot>
        <HScroll>
          <ScrollBtn aria-label="向左"><Chevron dir="left" /></ScrollBtn>
          <HThumb $end={10}><Grip /></HThumb>
          <ScrollBtn aria-label="向右"><Chevron dir="right" /></ScrollBtn>
        </HScroll>
        <ZoomArea>
          <Pick $w={156} $blue>
            <select aria-label="缩放比例"><option>100%</option></select>
            <PickArrow><Tri dir="down" size={8} /></PickArrow>
          </Pick>
          <SlideBox><Slide type="range" min="0" max="100" defaultValue="33" aria-label="缩放" /></SlideBox>
          <Tool $w={14} aria-label="适合窗口"><Icon name="fit" /></Tool>
        </ZoomArea>
      </StageFoot>
    </>
  );
}

function Label({ id, children }: { id: string; children: React.ReactNode }) {
  return <label htmlFor={id}>{children}<Colon>：</Colon></label>;
}

function ColorField({ id, label }: { id: string; label: string }) {
  return (
    <Field>
      <Label id={id}>{label}</Label>
      <ColorPick $w={126}>
        <Swatch />
        <select id={id}><option>182, 182, 182</option></select>
        <PickArrow><Tri dir="down" size={8} /></PickArrow>
      </ColorPick>
    </Field>
  );
}

function PropertyPane() {
  return (
    <Inspector>
      <Title>
        <h2>根画面 [画面]</h2>
        <InfoTabs>
          <InfoTab $w={74} $on><Icon name="inspect" />属性</InfoTab>
          <InfoTab $w={80}><Icon name="info" />信息<Grow /><Icon name="infoBadge" /></InfoTab>
          <InfoTab $w={75}><Icon name="stetho" />诊断</InfoTab>
        </InfoTabs>
        <WinBtns>
          <Tool $w={16} aria-label="还原"><Icon name="winRestore" /></Tool>
          <Tool $w={16} aria-label="列表"><Icon name="winList" /></Tool>
          <Tool $w={16} aria-label="折叠"><Icon name="winDown" /></Tool>
        </WinBtns>
      </Title>
      <TabStrip>
        <Tab $on>属性</Tab><Tab>动画</Tab><Tab>事件</Tab><Tab>文本</Tab>
      </TabStrip>
      <InspBody>
        <PropNav aria-label="属性列表">
          <PropHead><Icon name="propList" />属性列表</PropHead>
          <PropItem href="#general" $on>常规</PropItem>
          <PropItem href="#layer">层</PropItem>
        </PropNav>
        <Splitter>
          <SplitBtn aria-label="向左展开"><Tri dir="left" size={6} /></SplitBtn>
          <SplitBtn aria-label="向右展开"><Tri dir="right" size={6} /></SplitBtn>
        </Splitter>
        <Props>
          <PropTitle><h3>常规</h3></PropTitle>
          <Groups>
            <Group $w={372}>
              <h3>样式</h3>
              <Field>
                <Label id="name">名称</Label>
                <FieldBox><input id="name" defaultValue="根画面" /></FieldBox>
              </Field>
              <ColorField id="bg" label="背景色" />
              <ColorField id="grid" label="网格颜色" />
              <Field>
                <Label id="num">编号</Label>
                <FieldBox $w={66}>
                  <input id="num" type="number" defaultValue="1" />
                  <Spin>
                    <button aria-label="增加"><Tri dir="up" size={8} /></button>
                    <button aria-label="减少"><Tri dir="down" size={8} /></button>
                  </Spin>
                </FieldBox>
              </Field>
              <Field>
                <Label id="tpl">模板</Label>
                <FieldBox>
                  <input id="tpl" defaultValue="Template_1" />
                  <MiniBtn aria-label="选择模板"><Icon name="listBtn" /></MiniBtn>
                  <MiniBtn>...</MiniBtn>
                </FieldBox>
              </Field>
            </Group>
            <Group $w={264}>
              <h3>工具提示</h3>
              <TipBox>
                <textarea aria-label="工具提示" />
                <TipScroll>
                  <button aria-label="向上"><Chevron dir="up" color={c.line} /></button>
                  <button aria-label="向下"><Chevron dir="down" color={c.line} /></button>
                </TipScroll>
              </TipBox>
            </Group>
          </Groups>
        </Props>
      </InspBody>
    </Inspector>
  );
}

function ToolboxPane() {
  return (
    <Toolbox>
      <BoxTitle><h2>工具</h2></BoxTitle>
      <BoxHead>选件</BoxHead>
      <BoxTools>
        <Icon name="pointer" />
        <svg width="16" height="16" viewBox="0 0 16 16" aria-hidden="true">
          <circle cx="8" cy="4" r="3" fill="#f4d060" stroke="#b98a2c" /><path d="M6 7H10V10H15V14H2V11L6 10Z" fill="#d8a020" />
        </svg>
      </BoxTools>
      <Ruled>
        <Fold aria-label="折叠基本对象"><Chevron dir="down" color="#000" /></Fold><h3>基</h3>
      </Ruled>
      <Palette $h={150}>
        <svg width="26" height="26" viewBox="0 0 26 26" aria-hidden="true">
          <path d="M4 20L26 -2" stroke="#c8c8c8" /><path d="M3 19L25 -3" stroke="#3c55e0" strokeWidth="1.500" />
        </svg>
      </Palette>
      <Ruled>
        <Fold aria-label="折叠元素"><Chevron dir="down" color="#000" /></Fold><h3>元</h3>
      </Ruled>
      <Palette>
        <svg width="28" height="17" viewBox="0 0 28 17" fill="none" aria-hidden="true">
          <rect width="28" height="17" fill="#111" /><rect x="1" y="1" width="26" height="14" fill="#c9ccd0" />
          <path d="M3 3.500H8V12.500H3ZM11 11V13.500M15 3V13.500M18 3.500H24V7.500H18.500V12.500H25" stroke="#000" strokeWidth="2" />
        </svg>
        <svg width="28" height="27" viewBox="0 0 28 27" fill="none" aria-hidden="true">
          <rect width="28" height="27" fill="#606366" /><rect x="1" y="1" width="25" height="23" fill="#bfc1c3" />
          <path d="M5 4H8V9H5ZM23.500 3V10" stroke="#000" strokeWidth="1.500" />
          <rect x="3.500" y="11.500" width="21" height="11" fill="#e4e6e8" stroke="#75787b" />
          <rect x="4" y="12" width="10" height="10" fill="#8da2f0" stroke="#101840" /><path d="M15 22L24 13" stroke="#bfc1c3" strokeWidth="3" />
        </svg>
      </Palette>
      <LastArea>
        <Ruled>
          <Fold aria-label="折叠控件"><Chevron dir="down" color="#000" /></Fold>
        </Ruled>
        <svg width="28" height="36" viewBox="0 0 28 36" aria-hidden="true">
          <path d="M6.500 8.500H21V18H6.500Z" fill="#eef1ff" stroke="#6d86e4" /><path d="M7 9L14 16L21 9" stroke="#8ea2ee" fill="none" />
          <path d="M6 18.500H21" stroke="#4a5ee8" strokeWidth="2" /><path d="M11 34L21 11V34Z" fill="#fff000" stroke="#d8a800" />
        </svg>
        <Popup>
          <svg width="40" height="130" viewBox="0 0 40 130" fill="none" aria-hidden="true">
            <circle cx="16" cy="15" r="7" fill="#fff" stroke="#f0d020" strokeWidth="2" />
            <path d="M9 18Q13 24 20 22" stroke="#e04030" strokeWidth="2" />
            <circle cx="17" cy="14" r="4" stroke="#1590d0" strokeWidth="3" />
            <path d="M11 50H16V120H11Z" fill="#17171b" />
            <path d="M12 50L16 46V54H12Z" fill="#a8865c" /><path d="M12 55H16V60H12Z" fill="#c89078" />
            <path d="M12 67H16M13 81H16M12 93H16M13 104H16" stroke="#8a7466" />
          </svg>
        </Popup>
      </LastArea>
    </Toolbox>
  );
}

export default function App() {
  return (
    <Shell>
      <Global />
      <MenuBar aria-label="主菜单">
        {menus.map(([t, k]) => <MenuItem key={k}>{t}<small>(<u>{k}</u>)</small></MenuItem>)}
      </MenuBar>
      <ToolBar>
        <T i="newProject" w={22} label="新建项目" /><T i="open" w={22} label="打开项目" /><T i="save" label="保存" />
        <ToolText>保存项目</ToolText>
        <T i="print" w={26} label="打印" /><Sep />
        <T i="cut" label="剪切" /><T i="copy" label="复制" /><T i="paste" label="粘贴" /><T i="cross" label="删除" /><Sep />
        <T i="undo" w={22} label="撤销" /><D active /><T i="redo" w={26} label="重做" /><D /><Sep />
        <T i="find" w={26} label="查找" /><Sep />
        <T i="compile" label="编译" /><T i="load" label="下载" /><T i="upload" label="上传" />
        <T i="simulate" label="仿真" /><T i="runtime" label="启动运行系统" /><Sep />
        <T i="online" w={22} label="在线" /><ToolText>转到在线</ToolText>
        <T i="offline" w={22} label="离线" /><ToolText $dim>转到离线</ToolText><Sep />
        <T i="diag" w={26} label="可访问的设备" /><T i="start" label="启动" /><T i="stop" label="停止" /><Sep />
        <T i="crossRef" label="交叉引用" /><Sep />
        <T i="splitH" label="水平拆分" /><T i="splitV" label="垂直拆分" />
      </ToolBar>
      <Body>
        <Strip>
          <StripTop />
          <StripTab><span>可视化</span></StripTab>
        </Strip>
        <ProjectTree />
        <Main>
          <Editor />
          <PropertyPane />
        </Main>
        <ToolboxPane />
      </Body>
    </Shell>
  );
}
